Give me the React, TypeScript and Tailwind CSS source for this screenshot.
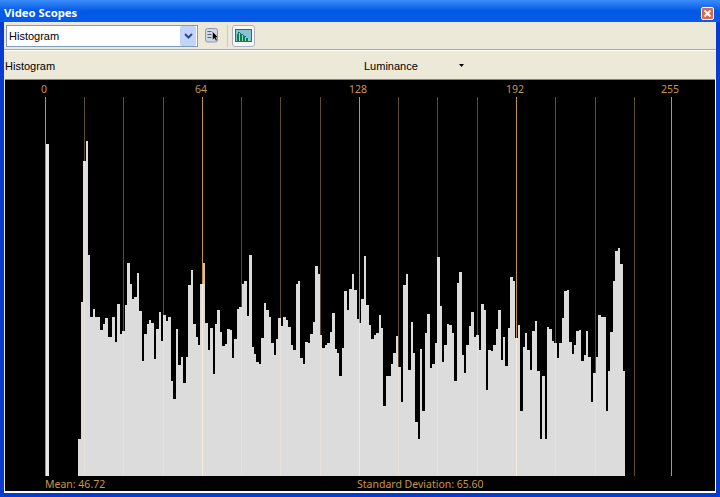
const F = "font-['Noto_Sans','Open_Sans',sans-serif]";
const UI = "font-['Liberation_Sans',Arial,sans-serif]";

// [left edge in px, top of the column in px]
const columns: [number, number][] = [
  [78, 439], [81, 302], [83, 161], [86, 141], [88, 255], [90, 317], [93, 309], [95, 317], [100, 330], [103, 324], [105, 318], [108, 337], [112, 317], [115, 342], [117, 304], [120, 334], [122, 331],
  [125, 305], [127, 263], [130, 284], [132, 299], [134, 297], [137, 273], [139, 311], [142, 361], [144, 334], [147, 324], [149, 320], [151, 323], [154, 359], [156, 329], [159, 312], [161, 341], [163, 315], [166, 321], [168, 317], [171, 381], [173, 399], [176, 329], [178, 365], [181, 357], [183, 383], [186, 357], [188, 285], [191, 270], [193, 324], [196, 337], [198, 345],
  [200, 284], [203, 263], [205, 323], [208, 350], [210, 328], [213, 374], [215, 324], [217, 310], [220, 332], [222, 346], [225, 344], [227, 329], [230, 330], [232, 358], [234, 339], [237, 309], [239, 307], [242, 284], [244, 281], [247, 316], [249, 255], [252, 347], [254, 354], [256, 362], [259, 364], [261, 338], [264, 303], [266, 310], [269, 317], [271, 343], [274, 355], [276, 339], [278, 318], [281, 326], [283, 317], [286, 320], [288, 327], [291, 345], [293, 350], [296, 284], [298, 281], [300, 358], [303, 364], [305, 342], [308, 343], [310, 334], [313, 322], [315, 266], [318, 274], [320, 335], [322, 348], [325, 345], [327, 343], [330, 332], [332, 313], [335, 349], [337, 353], [339, 376], [342, 348], [344, 291], [347, 310], [349, 289], [352, 274], [354, 290], [357, 319], [359, 323], [361, 299], [364, 256], [366, 305], [369, 325], [371, 339], [374, 335], [376, 333], [379, 315], [381, 328], [383, 406], [386, 376], [391, 364], [393, 353], [396, 336], [398, 367], [401, 402], [403, 285], [406, 274], [408, 370], [411, 322], [413, 353], [415, 422], [418, 439],
  [420, 349], [422, 411], [425, 333], [427, 314], [430, 368], [432, 364], [435, 343], [437, 257], [440, 306], [442, 362], [444, 345], [447, 324], [449, 325], [452, 333], [454, 381], [457, 283], [459, 272], [462, 355], [464, 373], [466, 345], [469, 326], [471, 312], [474, 337], [476, 335], [479, 350], [481, 304], [484, 310], [486, 390], [488, 350], [491, 351], [493, 345], [496, 329], [498, 310], [501, 360], [503, 337], [505, 366], [508, 328], [510, 277], [513, 281], [515, 338], [518, 325], [520, 411], [523, 347], [525, 333], [527, 350], [530, 370], [532, 331], [535, 321], [537, 371], [540, 439], [542, 376], [545, 439], [547, 327], [549, 329], [552, 341], [554, 343], [557, 358], [559, 343], [562, 318], [564, 291], [567, 290], [569, 342], [572, 354], [574, 345], [576, 331], [579, 330], [581, 361], [584, 355], [586, 331], [588, 357], [591, 402], [593, 373], [596, 357], [598, 315], [601, 317], [603, 317], [606, 411], [608, 371], [610, 332], [613, 281], [615, 251], [618, 248], [620, 264], [623, 371],
];
const END = 625;
const BASE = 476;

const minor = [84, 123, 163, 241, 280, 320, 398, 437, 477, 555, 595, 634];
const major = [45, 202, 359, 516, 671];
const labels: [number, string][] = [[44, "0"], [201, "64"], [358, "128"], [515, "192"], [670, "255"]];

function topAt(x: number) {
  for (let i = columns.length - 1; i >= 0; i--) {
    if (x >= columns[i][0]) return x < END ? columns[i][1] : BASE;
  }
  return BASE;
}

function Histogram() {
  return (
    <svg viewBox="5 80 710 396" width="710" height="396" className="block" shapeRendering="crispEdges">
      {major.map((x) => <rect key={x} x={x} y={97} width={1} height={BASE - 97} fill="#c2924a" />)}
      {minor.map((x) => <rect key={x} x={x} y={97} width={1} height={BASE - 97} fill="#5f4a33" />)}
      <rect x={46} y={144} width={3} height={BASE - 144} fill="#e8e8e8" />
      {columns.map(([x, top], i) => {
        const next = i + 1 < columns.length ? columns[i + 1][0] : END;
        return <rect key={x} x={x} y={top} width={next - x} height={BASE - top} fill="#dcdcdc" />;
      })}
      {major.slice(1, 4).map((x) => <rect key={x} x={x} y={topAt(x)} width={1} height={BASE - topAt(x)} fill="#f6ecdc" />)}
      {minor.filter((x) => x < END).map((x) => <rect key={x} x={x} y={topAt(x)} width={1} height={BASE - topAt(x)} fill="#e8e2d8" />)}
      <rect x={203} y={263} width={2} height={21} fill="#dcc08c" />
      {labels.map(([x, t]) => (
        <text key={t} x={x} y={93} textAnchor="middle" fontSize="10.5" fill="#c8964a" fontFamily="'Noto Sans', sans-serif" shapeRendering="auto">{t}</text>
      ))}
    </svg>
  );
}

function ListIcon() {
  return (
    <svg width="14" height="15" viewBox="0 0 14 15">
      <rect x="0.5" y="0.5" width="12" height="13.5" rx="2" fill="#cfd6e6" stroke="#8a97b5" />
      <path d="M2.5 3.5h4M2.5 6.5h4M2.5 9.5h4" stroke="#56627f" strokeWidth="1" />
      <path d="M7.5 3.5 L7.5 12 L9.5 10.2 L10.8 13 L12.2 12.3 L11 9.6 L13.4 9.4 Z" fill="#000" stroke="#fff" strokeWidth="0.4" />
    </svg>
  );
}

function ScopeIcon() {
  return (
    <svg width="17" height="13" viewBox="0 0 17 13" shapeRendering="crispEdges">
      <rect x="0" y="0" width="17" height="13" fill="#2f5fa8" />
      <rect x="1" y="1" width="15" height="11" fill="#86c3d9" />
      <path d="M2 12V5h1V3h2v1h1v1h2v1h1v1h2v2h2v1h1v2z" fill="#0f7a55" />
      <path d="M4 12V4M7 12V6M10 12V8M13 12V10" stroke="#9be0c0" strokeWidth="1" />
    </svg>
  );
}

export default function App() {
  return (
    <div className={`${F} flex h-[497px] w-[720px] flex-col overflow-hidden bg-[#0a3bd0] text-[11px] leading-none text-black`}>
      <div className="flex h-[22px] shrink-0 items-center justify-between bg-gradient-to-b from-[#3a8cf8] via-[#0058e6] to-[#0a5ae8] pl-[4px] pr-[6px] pt-[4px]">
        <span className="text-[11.3px] font-bold text-white">Video Scopes</span>
        <div className="flex h-[13px] w-[13px] items-center justify-center rounded-[2px] border border-white bg-[#d8694a]">
          <svg width="9" height="9" viewBox="0 0 9 9"><path d="M1.5 1.5l6 6M7.5 1.5l-6 6" stroke="#fff" strokeWidth="2" /></svg>
        </div>
      </div>

      <div className="flex min-h-0 flex-1 flex-col pb-[4px] pl-[4px] pr-[4px]">
        <div className="flex h-[28px] shrink-0 items-center border-b border-[#a5a5a5] bg-[#ece9d8] pl-[2px]">
          <div className={`${UI} flex h-[22px] w-[192px] items-center justify-between border border-[#7f9db9] bg-white pl-[2px] pr-[1px] text-[11px]`}>
            <span className="pt-[2px]">Histogram</span>
            <div className="flex h-[20px] w-[16px] items-center justify-center rounded-[2px] bg-[#c3d4fa]">
              <svg width="9" height="6" viewBox="0 0 9 6"><path d="M1 1l3.5 3.5L8 1" fill="none" stroke="#2d4a8a" strokeWidth="2" /></svg>
            </div>
          </div>
          <div className="ml-[7px] flex items-center"><ListIcon /></div>
          <div className="ml-[8px] h-[22px] w-px bg-[#cfccbd]" />
          <div className="ml-[4px] flex h-[22px] w-[23px] items-center justify-center rounded-[3px] border border-[#a8b2c4] bg-[#f8f7f1]"><ScopeIcon /></div>
        </div>

        <div className={`${UI} flex h-[29px] shrink-0 items-center border-t border-white bg-[#ece9d8] pl-[1px] text-[11px]`}>
          <span className="w-[359px] pt-[2px]">Histogram</span>
          <span className="w-[95px] pt-[2px]">Luminance</span>
          <svg width="5" height="3" viewBox="0 0 5 3"><path d="M0 0h5L2.5 3z" fill="#000" /></svg>
        </div>

        <div className="flex min-h-0 flex-1 flex-col border-b-2 border-r border-white bg-[#ece9d8] pl-[1px]">
          <div className="flex min-h-0 flex-1 flex-col border-t border-[#808080] bg-black">
            <Histogram />
            <div className="flex h-[15px] items-center pl-[40px] pt-[2px] text-[10.5px] text-[#c8964a]">
              <span className="w-[312px]">Mean: 46.72</span>
              <span>Standard Deviation: 65.60</span>
            </div>
          </div>
        </div>
      </div>
    </div>
  );
}
